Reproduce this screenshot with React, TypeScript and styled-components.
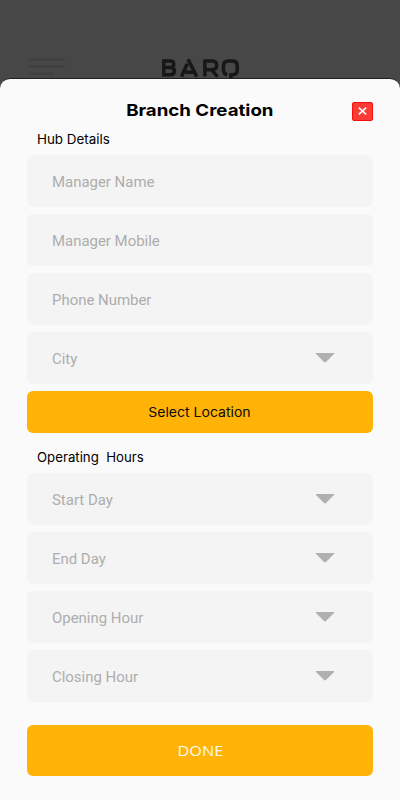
import React from "react";
import styled, { createGlobalStyle } from "styled-components";

const GlobalStyle = createGlobalStyle`
  * { box-sizing: border-box; }
  body { margin: 0; background: #474747; }
  button { border: 0; padding: 0; cursor: pointer; }
`;

const Screen = styled.div`
  display: flex;
  flex-direction: column;
  width: 400px;
  height: 800px;
  overflow: hidden;
  background: #474747;
`;

const Backdrop = styled.header`
  display: flex;
  flex: none;
  align-items: flex-start;
  height: 78px;
  padding: 58px 0 0 28px;
`;

const MenuIcon = styled.svg`
  flex: none;
  margin-right: 95px;
`;

const Logo = styled.svg`
  flex: none;
`;

const Sheet = styled.main`
  display: flex;
  flex: 1;
  flex-direction: column;
  padding: 22px 26.7px 0;
  background: #fafafa;
  border-top: 1px solid #242021;
  border-radius: 10px 10px 0 0;
`;

const TitleBar = styled.div`
  display: grid;
  grid-template-columns: 22px 1fr 22px;
  align-items: center;
  height: 20px;
`;

const Title = styled.h1`
  grid-column: 2;
  margin: 0;
  text-align: center;
  white-space: nowrap;
  font: 750 16.5px/20px Inter, sans-serif;
  color: #000;
  transform: translate(-0.5px, -1px) scaleX(1.132);
`;

const CloseButton = styled.button`
  display: flex;
  align-items: center;
  justify-content: center;
  width: 21px;
  height: 19px;
  margin-left: 0.7px;
  background: #f93c34;
  border: 1px solid #fb0d0d;
  border-radius: 2px;
`;

const Wide = styled.span<{ $scale: number; $center?: boolean }>`
  display: inline-block;
  white-space: pre;
  transform: scaleX(${(p) => p.$scale});
  transform-origin: ${(p) => (p.$center ? "center" : "left")};
`;

const SectionTitle = styled.h2<{ $top: number; $height: number }>`
  margin: ${(p) => p.$top}px 0 0;
  padding-left: 10.5px;
  height: ${(p) => p.$height}px;
  font: 400 13px/20px Inter, sans-serif;
  color: #000;
`;

const FieldList = styled.div`
  display: flex;
  flex-direction: column;
  gap: 7.5px;
`;

const FieldBox = styled.div`
  display: flex;
  align-items: center;
  justify-content: space-between;
  height: 51.5px;
  padding: 1.6px 38.4px 0 25.4px;
  background: #f4f4f4;
  border-radius: 6px;
  font: 400 14px/20px Roboto, sans-serif;
  color: #adadad;
`;

const Arrow = styled.svg`
  flex: none;
  margin-top: -1px;
`;

const ActionButton = styled.button<{ $variant: "select" | "done" }>`
  flex: none;
  height: ${(p) => (p.$variant === "done" ? 51 : 41.7)}px;
  margin-top: ${(p) => (p.$variant === "done" ? 23 : 7.7)}px;
  padding: ${(p) => (p.$variant === "done" ? "0 0 0 1px" : "0 1px 0 0")};
  background: #ffb307;
  border-radius: 6px;
  color: ${(p) => (p.$variant === "done" ? "#fffaf0" : "#0c0a05")};
  font: ${(p) =>
    p.$variant === "done"
      ? '400 15.2px/20px "Open Sans", sans-serif'
      : "400 13px/20px Inter, sans-serif"};
`;

function Field({ label, select }: { label: string; select?: boolean }) {
  return (
    <FieldBox>
      <Wide $scale={1.067}>{label}</Wide>
      {select && (
        <Arrow width="20" height="11" viewBox="0 0 20 11">
          <path d="M1.2.1h17.6q1 0 .2.8l-8 8.2q-1 .9-2 0L1 .9Q.2.1 1.2.1Z" fill="#b0b0b0" />
        </Arrow>
      )}
    </FieldBox>
  );
}

export default function App() {
  return (
    <>
      <GlobalStyle />
      <Screen>
        <Backdrop>
          <MenuIcon width="38" height="18" viewBox="0 0 38 18">
            <path d="M1.5 1.5h35M1.5 8.6h35M1.5 15.6h24" stroke="#3e3e3e" strokeWidth="1.6" strokeLinecap="round" />
          </MenuIcon>
          <Logo width="80" height="20.5" viewBox="0 0 80 20.5" fill="none" stroke="#171717" strokeWidth="3.5">
            <path d="M2.8 3H9.2q3.6 0 3.6 3.2T9.4 9.6H2.8M9.4 9.6q4 .2 4 3.6t-4 3.6H2.8V1.3" />
            <path d="M20.6 18.6l5.6-12.8M27 1.2l8.8 17.4M24.5 14.2h8.8" />
            <path d="M43.9 18.6V3h7.4q4.4 0 4.4 4.3t-4.4 4.4h-7.4M50.4 11.7l6.2 6.9" />
            <path d="M66.3 16.8q-3.8-.7-3.8-4.8V7.8q0-4.8 4.8-4.8h4.1q4.8 0 4.8 4.8V12q0 4.2-4 4.8h-2.3v3.7" />
          </Logo>
        </Backdrop>
        <Sheet>
          <TitleBar>
            <Title>Branch Creation</Title>
            <CloseButton aria-label="Close">
              <svg width="9" height="8" viewBox="0 0 9 8">
                <path d="M.8.7l7.4 6.6M8.2.7L.8 7.3" stroke="#fff" strokeWidth="1.6" />
              </svg>
            </CloseButton>
          </TitleBar>
          <SectionTitle $top={8.2} $height={26}>
            <Wide $scale={1.03}>Hub Details</Wide>
          </SectionTitle>
          <FieldList>
            <Field label="Manager Name" />
            <Field label="Manager Mobile" />
            <Field label="Phone Number" />
            <Field label="City" select />
          </FieldList>
          <ActionButton $variant="select">
            <Wide $scale={1.08} $center>Select Location</Wide>
          </ActionButton>
          <SectionTitle $top={14} $height={26.2}>
            <Wide $scale={1.017}>{"Operating  Hours"}</Wide>
          </SectionTitle>
          <FieldList>
            <Field label="Start Day" select />
            <Field label="End Day" select />
            <Field label="Opening Hour" select />
            <Field label="Closing Hour" select />
          </FieldList>
          <ActionButton $variant="done">
            <Wide $scale={1.07} $center>DONE</Wide>
          </ActionButton>
        </Sheet>
      </Screen>
    </>
  );
}
